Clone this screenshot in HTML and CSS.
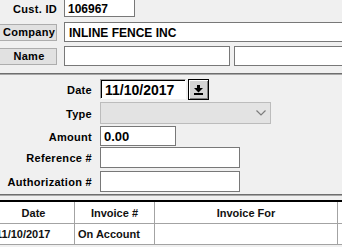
FILE: index.html
```html
<!DOCTYPE html>
<html>
<head>
<meta charset="utf-8">
<link rel="stylesheet" href="styles.css">
</head>
<body>
<div class="page">
  <div class="top">
    <div class="row r1">
      <div class="lab"><span class="label">Cust. ID</span></div>
      <div class="box cust">106967</div>
    </div>
    <div class="row r2">
      <div class="lab"><div class="btn">Company</div></div>
      <div class="box company">INLINE FENCE INC</div>
    </div>
    <div class="row r3">
      <div class="lab"><div class="btn">Name</div></div>
      <div class="box first"></div>
      <div class="box last"></div>
    </div>
  </div>
  <div class="sep s1"></div>
  <div class="form">
    <div class="frow f-date">
      <div class="flab">Date</div>
      <div class="datebox">11/10/2017</div>
      <div class="datebtn">
        <svg width="9" height="10" viewBox="0 0 9 10"><rect x="3" y="0" width="3" height="3" fill="#000"/><polygon points="0,3 9,3 4.5,7.5" fill="#000"/><rect x="0" y="8" width="9" height="2" fill="#000"/></svg>
      </div>
    </div>
    <div class="frow f-type">
      <div class="flab">Type</div>
      <div class="combo">
        <svg class="chev" width="10" height="6" viewBox="0 0 10 6"><polyline points="0.5,0.5 5,5 9.5,0.5" fill="none" stroke="#7c7c7c" stroke-width="1.2"/></svg>
      </div>
    </div>
    <div class="frow f-amount">
      <div class="flab">Amount</div>
      <div class="box amount">0.00</div>
    </div>
    <div class="frow f-ref">
      <div class="flab">Reference #</div>
      <div class="box wide"></div>
    </div>
    <div class="frow f-auth">
      <div class="flab">Authorization #</div>
      <div class="box wide"></div>
    </div>
  </div>
  <div class="sep s2"></div>
  <div class="grid">
    <div class="cell head">Date</div>
    <div class="cell head">Invoice #</div>
    <div class="cell head">Invoice For</div>
    <div class="cell head last"></div>
    <div class="cell body c1">11/10/2017</div>
    <div class="cell body c2">On Account</div>
    <div class="cell body"></div>
    <div class="cell body last"></div>
  </div>
</div>
</body>
</html>
```
FILE: styles.css
```css
* { box-sizing: border-box; }
html, body { margin: 0; padding: 0; }
body {
  background: #f0f0f0;
  width: 342px;
  height: 247px;
  overflow: hidden;
  font-family: "Liberation Sans", Arial, sans-serif;
  color: #000;
}
.page { width: 342px; }

.top { display: flex; flex-direction: column; }
.row { display: flex; align-items: center; }
.r1 { margin-top: -1px; height: 18px; }
.r2 { margin-top: 5px; height: 20px; }
.r3 { margin-top: 4px; height: 20px; }

.lab {
  width: 57px;
  flex-shrink: 0;
  margin-right: 7px;
  display: flex;
  justify-content: flex-end;
  align-items: center;
}
.label, .flab {
  font-size: 11px;
  font-weight: bold;
  letter-spacing: 0.3px;
}
.label { padding-top: 2px; }

.btn {
  width: 59px;
  margin-left: -2px;
  height: 17px;
  background: #e1e1e1;
  border: 1px solid #adadad;
  font-size: 11px;
  font-weight: bold;
  letter-spacing: 0.3px;
  display: flex;
  align-items: center;
  justify-content: center;
  padding-left: 3px;
}

.box {
  flex-shrink: 0;
  background: #fff;
  border: 1px solid #787878;
  height: 100%;
  font-size: 12px;
  font-weight: bold;
  display: flex;
  align-items: center;
  padding-left: 3px;
  padding-top: 1px;
}
.cust { width: 71px; }
.company { width: 290px; padding-left: 4px; }
.first { width: 166px; margin-right: 4px; }
.last { width: 120px; }

.sep {
  height: 2px;
  border-top: 1px solid #6e6e6e;
  border-bottom: 1px solid #a8a8a8;
}
.s1 { margin-top: 7px; }
.s2 { margin-top: 2px; }

.form { display: flex; flex-direction: column; }
.frow { display: flex; align-items: center; }
.flab {
  width: 92px;
  flex-shrink: 0;
  margin-right: 8px;
  text-align: right;
  padding-top: 1px;
}
.f-date { margin-top: 4px; height: 21px; }
.f-type { margin-top: 2px; height: 22px; }
.f-amount { margin-top: 2px; height: 20px; }
.f-ref { margin-top: 1px; height: 21px; }
.f-auth { margin-top: 3px; height: 21px; }

.datebox {
  flex-shrink: 0;
  width: 86px;
  height: 20px;
  align-self: flex-start;
  background: #fff;
  border-top: 1px solid #a0a0a0;
  border-left: 1px solid #a0a0a0;
  border-right: 1px solid #fff;
  border-bottom: 1px solid #fff;
  box-shadow: inset 1px 1px 0 #000;
  font-size: 14px;
  font-weight: bold;
  display: flex;
  align-items: center;
  padding-left: 4px;
  padding-top: 1px;
}
.datebtn {
  flex-shrink: 0;
  width: 21px;
  height: 21px;
  margin-left: 2px;
  background: #d4d4d4;
  border: 1px solid #000;
  box-shadow: inset 1px 1px 0 #fff, inset -1px -1px 0 #808080;
  display: flex;
  align-items: center;
  justify-content: center;
}
.datebtn svg { display: block; }

.combo {
  flex-shrink: 0;
  width: 171px;
  height: 22px;
  background: #e3e3e3;
  border: 1px solid #bcbcbc;
  display: flex;
  align-items: center;
  justify-content: flex-end;
  padding-right: 4px;
}
.chev { display: block; }

.amount { width: 76px; font-size: 13px; padding-left: 3px; }
.wide { width: 140px; }

.grid {
  margin-top: 4px;
  margin-left: -7px;
  width: 349px;
  display: grid;
  grid-template-columns: 82px 80px 183px 1fr;
  grid-template-rows: 22px 21px;
  background: #fff;
  border-top: 2px solid #000;
}
.cell {
  border-right: 1px solid #a3a3a3;
  border-bottom: 1px solid #a3a3a3;
  font-size: 11px;
  font-weight: bold;
  color: #111;
  display: flex;
  align-items: center;
}
.cell.last { border-right: none; }
.head { justify-content: center; padding-top: 1px; }
.body { padding-left: 4px; }
.c1 { padding-left: 3px; }
.c2 { padding-left: 3px; }
```
